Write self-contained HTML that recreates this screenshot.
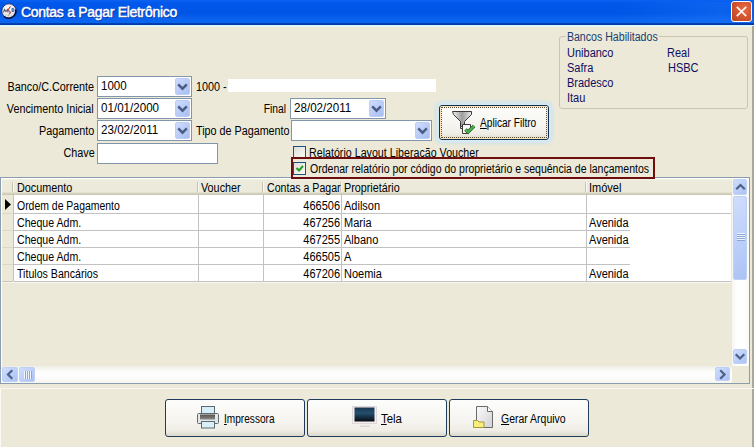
<!DOCTYPE html><html><head><meta charset="utf-8">
<style>
*{box-sizing:border-box;margin:0;padding:0}
html,body{width:754px;height:447px;overflow:hidden;background:#ECE9D8;font-family:"Liberation Sans",sans-serif;font-size:11px;color:#000}
.a{position:absolute;white-space:nowrap}
.t{position:absolute;white-space:nowrap;line-height:13px}
.combo{position:absolute;height:21px;background:#fff;border:1px solid #8196aa}
.dd{position:absolute;right:1px;top:1px;width:15px;height:17px;border-radius:2px;background:linear-gradient(135deg,#cfdcfd,#b9cbf8 55%,#a7bdf2);border:1px solid #bccdf5}
.lbl{position:absolute;white-space:nowrap;line-height:13px;letter-spacing:-0.2px}
.sbtn{position:absolute;border-radius:2px;border:1px solid #bfd0f5;background:linear-gradient(135deg,#d0ddfd,#bccff9 55%,#abc2f5)}
.btn{position:absolute;border:1px solid #1f3c5c;border-radius:3px;background:linear-gradient(#fdfdfc,#f5f4ef 60%,#efede5 85%,#dcd8cc)}
</style></head><body>
<div class="a" style="left:0;top:0;width:754px;height:27px;background:linear-gradient(#0c62f2 0px,#0058ea 3px,#0055e5 13px,#0a62ee 19px,#0866f0 23px,#0044b8 23px,#00389c 25px,#dcf4fd 25px,#ecf6ef 27px)"></div>
<svg class="a" style="left:0px;top:2px" width="18" height="18" viewBox="0 0 18 18">
<defs><radialGradient id="gl" cx="40%" cy="35%" r="70%"><stop offset="0" stop-color="#ffffff"></stop><stop offset=".7" stop-color="#e4e4ee"></stop><stop offset="1" stop-color="#b8bccc"></stop></radialGradient></defs>
<circle cx="9" cy="9" r="7.2" fill="url(#gl)" stroke="#1a2a60" stroke-width="0.8"></circle>
<path d="M15.6 7.5A7.2 7.2 0 0 1 4 14.5" stroke="#06103a" stroke-width="1.6" fill="none"></path>
<path d="M3.5 10.5l1 -3l1.5 2l1.5 -2l0.5 3" stroke="#5a6070" stroke-width="1.1" fill="none"></path>
<path d="M10.5 4.5l-2.5 3.5l2.5 2.5l-2 3" stroke="#b04838" stroke-width="1.1" fill="none"></path>
<path d="M12 6.5h1.5q1 1.5 0 3h-1.5z" stroke="#3a6ab8" stroke-width="1" fill="#9ab8e0"></path>
<path d="M5 12.5q3 1.5 5 0" stroke="#b8d8a0" stroke-width="1" fill="none"></path>
</svg>
<div class="a" style="left:21px;top:4px;font-size:14px;font-weight:normal;-webkit-text-stroke:0.45px #fff;color:#fff;line-height:16px;letter-spacing:-0.3px;text-shadow:1px 1px 0 #0a2a90">Contas a Pagar Eletrônico</div>
<div class="a" style="left:620px;top:2px;width:134px;height:21px;background:linear-gradient(90deg,rgba(40,130,255,0) 0,rgba(40,130,255,.28) 75%,rgba(40,130,255,.15) 100%)"></div>
<div class="a" style="left:731px;top:1px;width:21px;height:21px;border:1px solid #fff;border-radius:3px;background:radial-gradient(circle at 65% 35%,#e66a42,#d0532e 55%,#b8401f)"></div>
<svg class="a" style="left:731px;top:1px" width="21" height="21"><path d="M5.8 5.8L15.2 15.2M15.2 5.8L5.8 15.2" stroke="#fff4f0" stroke-width="1.7"></path></svg>
<div class="lbl" style="right: 660px; top: 81px; letter-spacing: 0px; font-size: 12px; transform: scaleX(0.9001); transform-origin: 100% 0px;">Banco/C.Corrente</div>
<div class="lbl" style="right: 660px; top: 103px; letter-spacing: 0px; font-size: 12px; transform: scaleX(0.8981); transform-origin: 100% 0px;">Vencimento Inicial</div>
<div class="lbl" style="right: 660px; top: 125px; letter-spacing: 0px; font-size: 12px; transform: scaleX(0.902); transform-origin: 100% 0px;">Pagamento</div>
<div class="lbl" style="right: 659px; top: 147px; letter-spacing: 0px; font-size: 12px; transform: scaleX(0.9027); transform-origin: 100% 0px;">Chave</div>
<div class="combo" style="left:97px;top:76px;width:95px"><div class="t" style="left: 3px; top: 3px; letter-spacing: 0px; font-size: 12px; transform: scaleX(0.9614); transform-origin: 0px 0px;">1000</div><div class="dd"><svg width="15" height="17" style="position:absolute;left:-1px;top:-1px"><path d="M4 7.2L7.5 10.7L11 7.2" stroke="#4a5d80" stroke-width="2.4" fill="none" stroke-linecap="square"></path></svg></div></div>
<div class="combo" style="left:97px;top:98px;width:95px"><div class="t" style="left: 3px; top: 3px; letter-spacing: 0px; font-size: 12px; transform: scaleX(0.9667); transform-origin: 0px 0px;">01/01/2000</div><div class="dd"><svg width="15" height="17" style="position:absolute;left:-1px;top:-1px"><path d="M4 7.2L7.5 10.7L11 7.2" stroke="#4a5d80" stroke-width="2.4" fill="none" stroke-linecap="square"></path></svg></div></div>
<div class="combo" style="left:97px;top:120px;width:95px"><div class="t" style="left: 3px; top: 3px; letter-spacing: 0px; font-size: 12px; transform: scaleX(0.9675); transform-origin: 0px 0px;">23/02/2011</div><div class="dd"><svg width="15" height="17" style="position:absolute;left:-1px;top:-1px"><path d="M4 7.2L7.5 10.7L11 7.2" stroke="#4a5d80" stroke-width="2.4" fill="none" stroke-linecap="square"></path></svg></div></div>
<div class="combo" style="left:97px;top:143px;width:121px"></div>
<div class="lbl" style="left: 196px; top: 81px; letter-spacing: 0px; font-size: 12px; transform: scaleX(0.899); transform-origin: 0px 0px;">1000 -</div>
<div class="a" style="left:228px;top:79px;width:208px;height:13px;background:#fff"></div>
<div class="lbl" style="right: 468px; top: 103px; letter-spacing: 0px; font-size: 12px; transform: scaleX(0.8589); transform-origin: 100% 0px;">Final</div>
<div class="combo" style="left:290px;top:98px;width:96px"><div class="t" style="left: 3px; top: 3px; letter-spacing: 0px; font-size: 12px; transform: scaleX(0.9675); transform-origin: 0px 0px;">28/02/2011</div><div class="dd"><svg width="15" height="17" style="position:absolute;left:-1px;top:-1px"><path d="M4 7.2L7.5 10.7L11 7.2" stroke="#4a5d80" stroke-width="2.4" fill="none" stroke-linecap="square"></path></svg></div></div>
<div class="lbl" style="left: 196px; top: 125px; letter-spacing: 0px; font-size: 12px; transform: scaleX(0.8971); transform-origin: 0px 0px;">Tipo de Pagamento</div>
<div class="combo" style="left:291px;top:120px;width:141px"><div class="dd"><svg width="15" height="17" style="position:absolute;left:-1px;top:-1px"><path d="M4 7.2L7.5 10.7L11 7.2" stroke="#4a5d80" stroke-width="2.4" fill="none" stroke-linecap="square"></path></svg></div></div>
<div class="a" style="left:559px;top:36px;width:189px;height:73px;border:1px solid #c9c6b2;border-radius:3px"></div>
<div class="lbl" style="left: 566px; top: 31px; letter-spacing: 0px; color: rgb(23, 62, 112); padding: 0px 1px; background: rgb(236, 233, 216); font-size: 12px; transform: scaleX(0.8839); transform-origin: 0px 0px;">Bancos Habilitados</div>
<div class="lbl" style="left: 567px; top: 47px; letter-spacing: 0px; color: rgb(14, 14, 98); font-size: 12px; transform: scaleX(0.9168); transform-origin: 0px 0px;">Unibanco</div>
<div class="lbl" style="left: 567px; top: 62px; letter-spacing: 0px; color: rgb(14, 14, 98); font-size: 12px; transform: scaleX(0.9167); transform-origin: 0px 0px;">Safra</div>
<div class="lbl" style="left: 567px; top: 77px; letter-spacing: 0px; color: rgb(14, 14, 98); font-size: 12px; transform: scaleX(0.9168); transform-origin: 0px 0px;">Bradesco</div>
<div class="lbl" style="left: 567px; top: 92px; letter-spacing: 0px; color: rgb(14, 14, 98); font-size: 12px; transform: scaleX(0.9173); transform-origin: 0px 0px;">Itau</div>
<div class="lbl" style="left: 667px; top: 47px; letter-spacing: 0px; color: rgb(14, 14, 98); font-size: 12px; transform: scaleX(0.9165); transform-origin: 0px 0px;">Real</div>
<div class="lbl" style="left: 668px; top: 62px; letter-spacing: 0px; color: rgb(14, 14, 98); font-size: 12px; transform: scaleX(0.9166); transform-origin: 0px 0px;">HSBC</div>
<div class="a" style="left:437px;top:103px;width:114px;height:39px;border-radius:5px;background:#d6e8f2;box-shadow:0 0 3px 2px rgba(200,228,244,.7)"></div>
<div class="btn" style="left:439px;top:105px;width:110px;height:35px;border-color:#10304e"></div>
<div class="a" style="left:440px;top:106px;width:108px;height:33px;border:1px solid #fbe3b8;border-radius:2px"></div>
<div class="a" style="left:441px;top:107px;width:106px;height:31px;border:1px dotted #5a4a30"></div>
<svg class="a" style="left:450px;top:109px" width="28" height="28" viewBox="0 0 28 28">
<defs><linearGradient id="fg" x1="0" x2="1"><stop offset="0" stop-color="#f4f4f4"></stop><stop offset=".5" stop-color="#9c9c9c"></stop><stop offset="1" stop-color="#e8e8e8"></stop></linearGradient></defs>
<path d="M2.5 2.5h19v3l-7 7v5h-4v-5l-7 -7z" fill="url(#fg)" stroke="#3a3a3a" stroke-width="1"></path>
<path d="M10.5 17.5v2h2" fill="none" stroke="#3a3a3a" stroke-width="1"></path>
<path d="M12.5 15.5h8v6h-8z" fill="#fafafa" stroke="#3a3a3a" stroke-width="1"></path>
<path d="M12.5 19v5.5h6" fill="#fafafa" stroke="#3a3a3a" stroke-width="1"></path>
<path d="M15.5 20.5l2.5 2.5l6 -6" stroke="#2a6a2a" stroke-width="3.6" fill="none"></path>
<path d="M15.5 20.5l2.5 2.5l6 -6" stroke="#4cb04c" stroke-width="2" fill="none"></path>
</svg>
<div class="lbl" style="left: 480px; top: 117px; letter-spacing: 0px; font-size: 12px; transform: scaleX(0.8433); transform-origin: 0px 0px;"><u>A</u>plicar Filtro</div>
<div class="a" style="left:293px;top:146px;width:13px;height:13px;border:1px solid #1c5180;background:linear-gradient(135deg,#dcdcd7,#fbfbf9)"></div>
<div class="lbl" style="left: 309px; top: 147px; letter-spacing: 0px; height: 10px; overflow: hidden; font-size: 12px; transform: scaleX(0.8899); transform-origin: 0px 0px;">Relatório Layout Liberação Voucher</div>
<div class="a" style="left:293px;top:162px;width:13px;height:13px;border:1px solid #1c5180;background:linear-gradient(135deg,#dcdcd7,#fbfbf9)"></div>
<svg class="a" style="left:294px;top:163px" width="11" height="11"><path d="M2.5 5l2.5 2.5L9 3" stroke="#21a121" stroke-width="2" fill="none"></path></svg>
<div class="lbl" style="left: 310px; top: 163px; letter-spacing: 0px; font-size: 12px; transform: scaleX(0.8763); transform-origin: 0px 0px;">Ordenar relatório por código do proprietário e sequência de lançamentos</div>
<div class="a" style="left:0;top:177px;width:750px;height:207px;border:1px solid #8a9cb0;background:#ECE9D8"></div>
<div class="a" style="left:1px;top:178px;width:748px;height:205px;border-left:1px solid #fff;border-top:1px solid #fff"></div>
<div class="a" style="left:2px;top:179px;width:730px;height:16px;background:linear-gradient(#f4f3ea 0,#ebeadb 2px,#ebeadb 13px,#e2dfcf 13px,#e2dfcf 14px,#d6d2c0 14px,#d6d2c0 15px,#ccc8b5 15px)"></div>
<div class="a" style="left:12px;top:182px;width:1px;height:10px;background:#c6c3b2"></div><div class="a" style="left:13px;top:182px;width:1px;height:10px;background:#f8f8f2"></div>
<div class="a" style="left:197px;top:182px;width:1px;height:10px;background:#c6c3b2"></div><div class="a" style="left:198px;top:182px;width:1px;height:10px;background:#f8f8f2"></div>
<div class="a" style="left:262px;top:182px;width:1px;height:10px;background:#c6c3b2"></div><div class="a" style="left:263px;top:182px;width:1px;height:10px;background:#f8f8f2"></div>
<div class="a" style="left:340px;top:182px;width:1px;height:10px;background:#c6c3b2"></div><div class="a" style="left:341px;top:182px;width:1px;height:10px;background:#f8f8f2"></div>
<div class="a" style="left:585px;top:182px;width:1px;height:10px;background:#c6c3b2"></div><div class="a" style="left:586px;top:182px;width:1px;height:10px;background:#f8f8f2"></div>
<div class="lbl" style="left: 17px; top: 182px; letter-spacing: 0px; font-size: 12px; transform: scaleX(0.902); transform-origin: 0px 0px;">Documento</div>
<div class="lbl" style="left: 201px; top: 182px; letter-spacing: 0px; font-size: 12px; transform: scaleX(0.9007); transform-origin: 0px 0px;">Voucher</div>
<div class="lbl" style="left: 267px; top: 182px; letter-spacing: 0px; font-size: 12px; transform: scaleX(0.8831); transform-origin: 0px 0px;">Contas a Pagar</div>
<div class="lbl" style="left: 344px; top: 182px; letter-spacing: 0px; font-size: 12px; transform: scaleX(0.8975); transform-origin: 0px 0px;">Proprietário</div>
<div class="lbl" style="left: 589px; top: 182px; letter-spacing: 0px; font-size: 12px; transform: scaleX(0.9169); transform-origin: 0px 0px;">Imóvel</div>
<div class="a" style="left:14px;top:195px;width:717px;height:86px;background:#fff"></div>
<div class="a" style="left:2px;top:213px;width:11px;height:1px;background:#dcd9c8"></div>
<div class="a" style="left:14px;top:213px;width:717px;height:1px;background:#c2c2c2"></div>
<div class="a" style="left:2px;top:230px;width:11px;height:1px;background:#dcd9c8"></div>
<div class="a" style="left:14px;top:230px;width:616px;height:1px;background:#c2c2c2"></div>
<div class="a" style="left:2px;top:247px;width:11px;height:1px;background:#dcd9c8"></div>
<div class="a" style="left:14px;top:247px;width:616px;height:1px;background:#c2c2c2"></div>
<div class="a" style="left:2px;top:264px;width:11px;height:1px;background:#dcd9c8"></div>
<div class="a" style="left:14px;top:264px;width:616px;height:1px;background:#c2c2c2"></div>
<div class="a" style="left:2px;top:281px;width:11px;height:1px;background:#dcd9c8"></div>
<div class="a" style="left:14px;top:281px;width:717px;height:1px;background:#c2c2c2"></div>
<div class="a" style="left:13px;top:195px;width:1px;height:86px;background:#c2c2c2"></div>
<div class="a" style="left:198px;top:195px;width:1px;height:86px;background:#c2c2c2"></div>
<div class="a" style="left:263px;top:195px;width:1px;height:86px;background:#c2c2c2"></div>
<div class="a" style="left:341px;top:195px;width:1px;height:86px;background:#c2c2c2"></div>
<div class="a" style="left:586px;top:195px;width:1px;height:86px;background:#c2c2c2"></div>
<div class="lbl" style="left: 17px; top: 200px; letter-spacing: 0px; font-size: 12px; transform: scaleX(0.8708); transform-origin: 0px 0px;">Ordem de Pagamento</div>
<div class="lbl" style="right: 414px; top: 200px; letter-spacing: 0px; font-size: 12px; transform: scaleX(0.9169); transform-origin: 100% 0px;">466506</div>
<div class="lbl" style="left: 344px; top: 200px; letter-spacing: 0px; font-size: 12px; transform: scaleX(0.9166); transform-origin: 0px 0px;">Adilson</div>
<div class="lbl" style="left: 17px; top: 217px; letter-spacing: 0px; font-size: 12px; transform: scaleX(0.882); transform-origin: 0px 0px;">Cheque Adm.</div>
<div class="lbl" style="right: 414px; top: 217px; letter-spacing: 0px; font-size: 12px; transform: scaleX(0.9169); transform-origin: 100% 0px;">467256</div>
<div class="lbl" style="left: 344px; top: 217px; letter-spacing: 0px; font-size: 12px; transform: scaleX(0.9167); transform-origin: 0px 0px;">Maria</div>
<div class="lbl" style="left: 589px; top: 217px; letter-spacing: 0px; font-size: 12px; transform: scaleX(0.9167); transform-origin: 0px 0px;">Avenida</div>
<div class="lbl" style="left: 17px; top: 234px; letter-spacing: 0px; font-size: 12px; transform: scaleX(0.882); transform-origin: 0px 0px;">Cheque Adm.</div>
<div class="lbl" style="right: 414px; top: 234px; letter-spacing: 0px; font-size: 12px; transform: scaleX(0.9169); transform-origin: 100% 0px;">467255</div>
<div class="lbl" style="left: 344px; top: 234px; letter-spacing: 0px; font-size: 12px; transform: scaleX(0.9168); transform-origin: 0px 0px;">Albano</div>
<div class="lbl" style="left: 589px; top: 234px; letter-spacing: 0px; font-size: 12px; transform: scaleX(0.9167); transform-origin: 0px 0px;">Avenida</div>
<div class="lbl" style="left: 17px; top: 251px; letter-spacing: 0px; font-size: 12px; transform: scaleX(0.882); transform-origin: 0px 0px;">Cheque Adm.</div>
<div class="lbl" style="right: 414px; top: 251px; letter-spacing: 0px; font-size: 12px; transform: scaleX(0.9169); transform-origin: 100% 0px;">466505</div>
<div class="lbl" style="left: 344px; top: 251px; letter-spacing: 0px; font-size: 12px; transform: scaleX(0.9162); transform-origin: 0px 0px;">A</div>
<div class="lbl" style="left: 17px; top: 268px; letter-spacing: 0px; font-size: 12px; transform: scaleX(0.8852); transform-origin: 0px 0px;">Titulos Bancários</div>
<div class="lbl" style="right: 414px; top: 268px; letter-spacing: 0px; font-size: 12px; transform: scaleX(0.9169); transform-origin: 100% 0px;">467206</div>
<div class="lbl" style="left: 344px; top: 268px; letter-spacing: 0px; font-size: 12px; transform: scaleX(0.9165); transform-origin: 0px 0px;">Noemia</div>
<div class="lbl" style="left: 589px; top: 268px; letter-spacing: 0px; font-size: 12px; transform: scaleX(0.9167); transform-origin: 0px 0px;">Avenida</div>
<svg class="a" style="left:5px;top:199px" width="7" height="11"><path d="M0 0L6 5.5L0 11z" fill="#000"></path></svg>
<div class="a" style="left:732px;top:178px;width:17px;height:188px;background:linear-gradient(90deg,#f6f5f0,#fefefe 25%,#fefefe 75%,#f8f8f4)"></div>
<div class="sbtn" style="left:733px;top:179px;width:14px;height:16px"><svg width="15" height="16" style="position:absolute;left:-1px;top:-1px"><path d="M4 9.5L7.5 6L11 9.5" stroke="#4d6185" stroke-width="2.2" fill="none" stroke-linecap="square"></path></svg></div>
<div class="sbtn" style="left:733px;top:196px;width:14px;height:84px"><div class="a" style="left:2.5px;top:36px;width:8px;height:8px;background:repeating-linear-gradient(#eef4fe 0,#eef4fe 1px,#8ca6d8 1px,#8ca6d8 2px)"></div></div>
<div class="sbtn" style="left:733px;top:349px;width:14px;height:15px"><svg width="15" height="16" style="position:absolute;left:-1px;top:-1px"><path d="M3.5 6L7 9.5L10.5 6" stroke="#4d6185" stroke-width="2.2" fill="none" stroke-linecap="square"></path></svg></div>
<div class="a" style="left:1px;top:366px;width:731px;height:17px;background:linear-gradient(#eeede5,#fcfcfa 30%,#fefefe 60%,#f6f5ef)"></div>
<div class="sbtn" style="left:2px;top:367px;width:16px;height:15px"><svg width="16" height="15" style="position:absolute;left:-1px;top:-1px"><path d="M9.5 4L6 7.5L9.5 11" stroke="#4d6185" stroke-width="2.2" fill="none" stroke-linecap="square"></path></svg></div>
<div class="sbtn" style="left:19px;top:367px;width:16px;height:15px"><div class="a" style="left:4px;top:3px;width:8px;height:8px;background:repeating-linear-gradient(90deg,#eef4fe 0,#eef4fe 1px,#8ca6d8 1px,#8ca6d8 2px)"></div></div>
<div class="sbtn" style="left:715px;top:367px;width:15px;height:14px"><svg width="15" height="15" style="position:absolute;left:-1px;top:-1px"><path d="M6 4L9.5 7.5L6 11" stroke="#4d6185" stroke-width="2.2" fill="none" stroke-linecap="square"></path></svg></div>
<div class="a" style="left:732px;top:366px;width:17px;height:17px;background:#ECE9D8"></div>
<div class="a" style="left:2px;top:282px;width:729px;height:1px;background:#f6f5ee"></div>
<div class="a" style="left:2px;top:281px;width:11px;height:1px;background:#c8c6b8"></div>
<div class="a" style="left:291px;top:157px;width:364px;height:22px;border:2px solid #6e0e0e"></div>
<div class="a" style="left:0;top:388px;width:1px;height:59px;background:#fbfaf2"></div>
<div class="a" style="left:752px;top:26px;width:2px;height:421px;background:#aca899"></div>
<div class="a" style="left:0;top:388px;width:754px;height:1px;background:#f8f7ef"></div>
<div class="btn" style="left:165px;top:399px;width:140px;height:38px"></div>
<div class="btn" style="left:307px;top:399px;width:140px;height:38px"></div>
<div class="btn" style="left:449px;top:399px;width:140px;height:38px"></div>
<svg class="a" style="left:196px;top:405px" width="24" height="25" viewBox="0 0 24 25">
<rect x="5.5" y="1.5" width="13" height="7" fill="#d6eef8" stroke="#5c6c74"></rect>
<rect x="1.5" y="8.5" width="21" height="10" rx="1" fill="#e4e8e8" stroke="#5c6c74"></rect>
<defs><linearGradient id="pb" x1="0" y1="0" x2="0" y2="1"><stop offset="0" stop-color="#55534f"></stop><stop offset="1" stop-color="#8a8884"></stop></linearGradient></defs><rect x="4" y="9.5" width="15" height="5" fill="url(#pb)"></rect>
<rect x="5.5" y="16.5" width="13" height="6.5" fill="#dceff6" stroke="#5c6c74"></rect>
</svg>
<svg class="a" style="left:352px;top:406px" width="26" height="23" viewBox="0 0 26 23">
<defs><linearGradient id="sc" x1="0" y1="0" x2="0" y2="1"><stop offset="0" stop-color="#1a3552"></stop><stop offset=".4" stop-color="#24506e"></stop><stop offset="1" stop-color="#050c10"></stop></linearGradient></defs>
<rect x="0.5" y="0.5" width="24" height="17" fill="#f6eeee" stroke="#e0d8d8"></rect>
<rect x="2.5" y="1.5" width="20" height="14" fill="url(#sc)"></rect>
<rect x="8" y="19.5" width="10" height="1.5" fill="#d8d8d8"></rect>
</svg>
<svg class="a" style="left:472px;top:405px" width="23" height="24" viewBox="0 0 23 24">
<defs><linearGradient id="pg" x1="0" y1="0" x2="1" y2="1"><stop offset="0" stop-color="#fbfbfb"></stop><stop offset="1" stop-color="#d4d0d6"></stop></linearGradient></defs>
<path d="M4.5 1.5h11l5 5v16h-16z" fill="url(#pg)" stroke="#6a6a6a"></path>
<path d="M15.5 1.5v5h5" fill="#fff" stroke="#6a6a6a"></path>
<path d="M1.5 15.5h4l1.5 1.5h5v5.5h-10.5z" fill="#f6ee7a" stroke="#a8983a"></path>
</svg>
<div class="lbl" style="left: 224px; top: 413px; letter-spacing: 0px; font-size: 12px; transform: scaleX(0.8417); transform-origin: 0px 0px;"><u>I</u>mpressora</div>
<div class="lbl" style="left: 381px; top: 413px; letter-spacing: 0px; font-size: 12px; transform: scaleX(0.9532); transform-origin: 0px 0px;"><u>T</u>ela</div>
<div class="lbl" style="left: 501px; top: 413px; letter-spacing: 0px; font-size: 12px; transform: scaleX(0.8728); transform-origin: 0px 0px;"><u>G</u>erar Arquivo</div>

</body></html>
